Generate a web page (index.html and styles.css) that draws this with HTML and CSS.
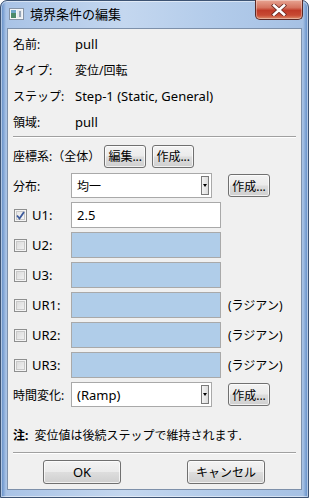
FILE: index.html
```html
<!DOCTYPE html>
<html lang="ja">
<head>
<meta charset="utf-8">
<link rel="stylesheet" href="styles.css">
</head>
<body>
<div class="win">
  <div class="titlebar">
    <svg class="appicon" width="15" height="12" viewBox="0 0 15 12">
      <rect x="0.5" y="0.5" width="14" height="11" fill="#f4f6f8" stroke="#8593a6"/>
      <rect x="2" y="2" width="5" height="8" fill="#4c8a6a"/>
      <rect x="2" y="2" width="5" height="3" fill="#6fa7c9"/>
      <rect x="8" y="2" width="5" height="8" fill="#e7eaee"/>
      <rect x="10" y="3" width="2" height="6" fill="#97a6b8"/>
    </svg>
    <span class="title">境界条件の編集</span>
    <div class="close">
      <svg width="16" height="12" viewBox="0 0 16 12">
        <path d="M3 1.5 L13 10.5 M13 1.5 L3 10.5" stroke="#6b2a22" stroke-width="4.2" stroke-linecap="square" fill="none"/>
        <path d="M3 1.5 L13 10.5 M13 1.5 L3 10.5" stroke="#ffffff" stroke-width="2.6" stroke-linecap="square" fill="none"/>
      </svg>
    </div>
  </div>
  <div class="panel">
    <div class="info">
      <span>名前:</span><span class="en">pull</span>
      <span>タイプ:</span><span>変位/回転</span>
      <span>ステップ:</span><span class="en">Step-1 (Static, General)</span>
      <span>領域:</span><span class="en">pull</span>
    </div>
    <div class="sep"></div>
    <div class="row coord">
      <span>座標系:（全体）</span>
      <button class="btn small">編集...</button>
      <button class="btn small">作成...</button>
    </div>
    <div class="row dist">
      <span class="lab">分布:</span>
      <div class="combo"><span>均一</span><span class="arrow"></span></div>
      <button class="btn small side">作成...</button>
    </div>
    <div class="row field">
      <span class="lab"><span class="cb checked"><svg width="9" height="9" viewBox="0 0 9 9"><path d="M1 4.5 L3.5 7.5 L8 1" stroke="#3c5a9c" stroke-width="1.8" fill="none"/></svg></span><span class="en">U1:</span></span>
      <div class="inp white"><span class="en">2.5</span></div>
    </div>
    <div class="row field">
      <span class="lab"><span class="cb"></span><span class="en">U2:</span></span>
      <div class="inp"></div>
    </div>
    <div class="row field">
      <span class="lab"><span class="cb"></span><span class="en">U3:</span></span>
      <div class="inp"></div>
    </div>
    <div class="row field">
      <span class="lab"><span class="cb"></span><span class="en">UR1:</span></span>
      <div class="inp"></div>
      <span class="unit">(ラジアン)</span>
    </div>
    <div class="row field">
      <span class="lab"><span class="cb"></span><span class="en">UR2:</span></span>
      <div class="inp"></div>
      <span class="unit">(ラジアン)</span>
    </div>
    <div class="row field">
      <span class="lab"><span class="cb"></span><span class="en">UR3:</span></span>
      <div class="inp"></div>
      <span class="unit">(ラジアン)</span>
    </div>
    <div class="row time">
      <span class="lab">時間変化:</span>
      <div class="combo"><span class="en">(Ramp)</span><span class="arrow"></span></div>
      <button class="btn small side">作成...</button>
    </div>
    <div class="note"><b>注:</b> 変位値は後続ステップで維持されます.</div>
    <div class="sep"></div>
    <div class="actions">
      <button class="btn wide"><span class="en">OK</span></button>
      <button class="btn wide">キャンセル</button>
    </div>
  </div>
</div>
</body>
</html>
```

FILE: styles.css
```css
* { box-sizing: border-box; }
html, body { margin: 0; padding: 0; background: #ffffff; }
body {
  font-family: "Noto Sans", "Noto Sans CJK JP", sans-serif;
  font-size: 12px;
  color: #000;
}
.en { font-size: 13px; }
.win {
  width: 309px;
  height: 498px;
  border: 1px solid #3d5373;
  border-radius: 7px 7px 0 0;
  background: linear-gradient(90deg, #5b88c4 0, #a9c3e6 5px, #c4d7ef 40%, #b2cbea 70%, #a6c1e4 calc(100% - 5px), #5b88c4 100%);
  padding: 0 6px 7px 6px;
  display: flex;
  flex-direction: column;
  box-shadow: inset 0 0 0 1px rgba(255,255,255,0.5);
}
.titlebar {
  height: 27px;
  display: flex;
  align-items: center;
  position: relative;
  padding-left: 2px;
}
.appicon { margin-right: 6px; margin-top: -1px; }
.title { font-size: 13px; color: #000; margin-top: -2px; }
.close {
  position: absolute;
  right: -1px;
  top: -1px;
  width: 48px;
  height: 20px;
  border: 1px solid #5a2a26;
  border-top: none;
  border-radius: 0 0 5px 5px;
  background: linear-gradient(#e8a593 0, #d5735f 40%, #c03b28 55%, #c84a33 80%, #dd8c6a 100%);
  display: flex;
  align-items: center;
  justify-content: center;
  box-shadow: inset 0 0 0 1px rgba(255,255,255,0.35);
}
.panel {
  flex: 1;
  background: #f0f0f0;
  border: 1px solid #7d90aa;
  padding: 0 5px;
  display: flex;
  flex-direction: column;
}
.info {
  display: grid;
  grid-template-columns: 62px 1fr;
  grid-auto-rows: 26px;
  align-items: center;
  padding-left: 0;
  margin-top: 2px;
}
.sep {
  height: 2px;
  border-top: 1px solid #a0a0a0;
  border-bottom: 1px solid #ffffff;
  margin-top: 1px;
}
.row {
  display: flex;
  align-items: center;
  position: relative;
}
.coord { height: 22px; margin-top: 7px; }
.coord span { margin-right: 4px; }
.coord .btn + .btn { margin-left: 6px; }
.lab {
  width: 58px;
  flex: none;
  display: flex;
  align-items: center;
}
.dist { height: 25px; margin-top: 6px; }
.field { height: 26px; margin-top: 4px; }
.dist + .field { margin-top: 4px; }
.time { height: 25px; margin-top: 4px; }
.combo {
  width: 141px;
  height: 25px;
  background: #fff;
  border: 1px solid #a9a9a9;
  display: flex;
  align-items: center;
  padding-left: 5px;
  position: relative;
}
.arrow {
  position: absolute;
  right: 2px;
  top: 2px;
  width: 8px;
  height: 19px;
  border: 1px solid #7a7a7a;
  background: linear-gradient(90deg, #f4f4f4, #dcdcdc);
}
.arrow::after {
  content: "";
  position: absolute;
  left: 1px;
  top: 7px;
  border-left: 2px solid transparent;
  border-right: 2px solid transparent;
  border-top: 3px solid #000;
}
.side { margin-left: 16px; }
.inp {
  width: 150px;
  height: 26px;
  border: 1px solid #a9a9a9;
  background: #b0cde9;
  display: flex;
  align-items: center;
  padding-left: 5px;
}
.inp.white { background: #fff; }
.unit { margin-left: 7px; }
.cb {
  width: 13px;
  height: 13px;
  border: 1px solid #8e8f8f;
  background: linear-gradient(135deg, #d6d6d6, #f6f6f6);
  box-shadow: inset 0 0 0 1px #f4f4f4, inset 0 0 0 2px #c9c9c9;
  margin-left: 1px;
  margin-right: 5px;
  display: flex;
  align-items: center;
  justify-content: center;
}
.cb.checked { background: linear-gradient(135deg, #e2e2e2, #fafafa); }
.btn {
  font-family: inherit;
  font-size: 12px;
  color: #000;
  border: 1px solid #707070;
  border-radius: 3px;
  background: linear-gradient(#f3f3f3 0, #ebebeb 48%, #dddddd 52%, #cfcfcf 100%);
  box-shadow: inset 0 0 0 1px rgba(255,255,255,0.7);
  padding: 0;
  display: flex;
  align-items: center;
  justify-content: center;
}
.btn.small { width: 42px; height: 23px; }
.note { margin-top: 21px; height: 16px; line-height: 16px; }
.note b { font-weight: bold; margin-right: 3px; }
.note + .sep { margin-top: 8px; }
.actions {
  display: flex;
  justify-content: space-between;
  padding: 0 31px 0 30px;
  margin-top: 6px;
}
.btn.wide { width: 78px; height: 24px; }
```
